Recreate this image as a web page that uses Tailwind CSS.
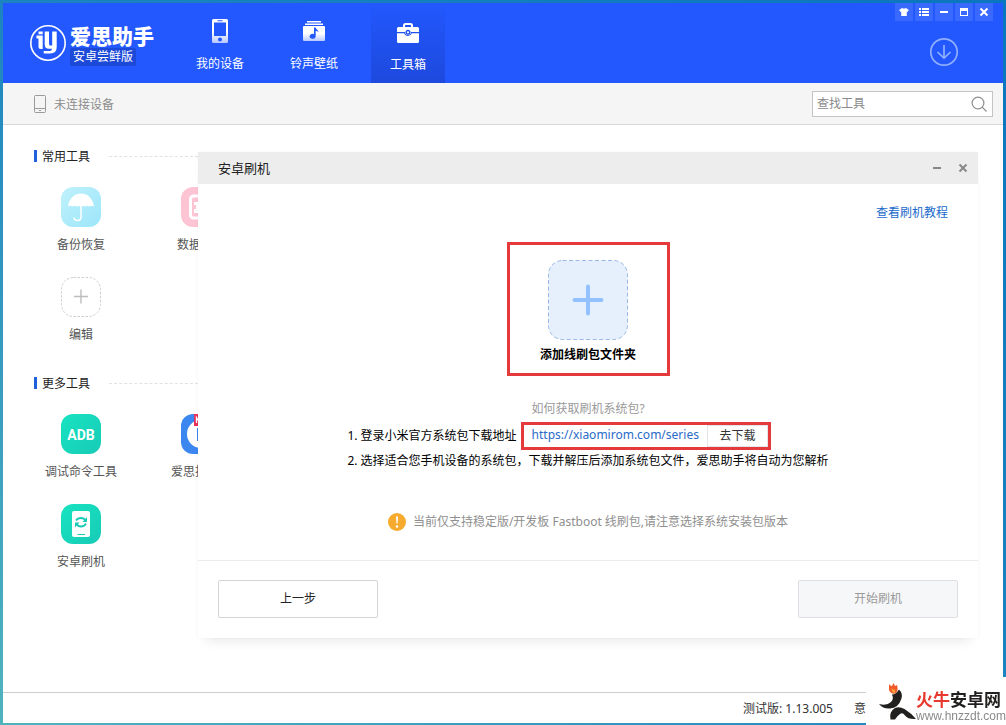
<!DOCTYPE html>
<html lang="zh-CN">
<head>
<meta charset="utf-8">
<meta name="viewport" content="width=device-width, initial-scale=1">
<title>爱思助手 安卓尝鲜版</title>
<script src="https://cdn.jsdelivr.net/npm/@tailwindcss/browser@4"></script>
</head>
<body class="h-screen overflow-hidden bg-linear-to-tr from-[#4fb3bd] via-[#1c84c0] to-[#0a76bf] p-[3px] pb-[2px] font-['Noto_Sans','Noto_Sans_CJK_SC',sans-serif] text-xs leading-4 text-[#222]">
<div class="flex h-full flex-col bg-white">

  <!-- Title bar -->
  <header class="flex h-20 shrink-0 justify-between bg-[#2358fe] text-white">
    <div class="flex">
      <div class="flex w-[180px] items-center gap-[3px] pl-[26px]">
        <svg class="size-[38px] shrink-0" viewBox="0 0 38 38" fill="none" stroke="#fff" aria-hidden="true">
          <circle cx="19" cy="19" r="17.200" stroke-width="1.600"/>
          <path fill="#fff" stroke="none" d="M9.500 7.500h4.200v2.700H9.500zM7.500 11.500h6.200V25h-2.200q-2 0-2-2v-8.500h-2z"/>
          <path fill="#fff" stroke="none" d="M15.700 7.500h4.300V20q0 1.500 1.500 1.500h1.700v-14h4.500V23q0 6.500-6.500 6.500h-6.500V27h6q2.300 0 2.300-2.200h-3q-4.300 0-4.300-4.300z"/>
        </svg>
        <div class="flex flex-col items-start pt-1">
          <span class="text-[21px] leading-[24px] font-black whitespace-nowrap">爱思助手</span>
          <span class="rounded-xs bg-[#1c49d8] px-[3px] pt-px pb-px leading-4">安卓尝鲜版</span>
        </div>
      </div>
      <nav class="flex gap-5">
        <a href="#" class="flex w-[74px] flex-col items-center pt-4">
          <svg class="h-6 w-4" viewBox="0 0 16 24" aria-hidden="true">
            <defs><linearGradient id="fade" x1="0" y1="0" x2="0" y2="1"><stop offset=".5" stop-color="#fff"/><stop offset="1" stop-color="#b8c8ff"/></linearGradient></defs>
            <path fill="url(#fade)" fill-rule="evenodd" d="M1.500 0h13a1.500 1.500 0 0 1 1.500 1.500v21a1.500 1.500 0 0 1-1.500 1.500h-13A1.500 1.500 0 0 1 0 22.500v-21A1.500 1.500 0 0 1 1.500 0zM2 3.500V17h12V3.500zM5.500 1.300v1h5v-1zM8 18.500a2 2 0 1 0 0 4 2 2 0 0 0 0-4z"/>
          </svg>
          <span class="mt-[13px]">我的设备</span>
        </a>
        <a href="#" class="flex w-[74px] flex-col items-center pt-4">
          <svg class="h-6 w-[22px]" viewBox="0 0 22 24" aria-hidden="true">
            <path fill="#fff" d="M4 2h14v1.500H4zM2 4.500h18V6H2z"/>
            <rect y="7" width="22" height="15" rx="1" fill="url(#fade)"/>
            <path fill="#2358fe" d="M11 8.500h1.700c.3 2 2.800 2 2.800 5-.8-1.200-1.600-1.400-2.800-1.500v5.500a3 2.500 0 1 1-1.700-2.500z"/>
          </svg>
          <span class="mt-[13px]">铃声壁纸</span>
        </a>
        <a href="#" aria-current="page" class="flex w-[74px] flex-col items-center bg-linear-to-b from-[#2358fe] to-[#1d49dd] pt-[18px]">
          <svg class="h-6 w-[22px]" viewBox="0 0 22 24" aria-hidden="true">
            <path fill="none" stroke="#fff" stroke-width="2" d="M7 7V4.500Q7 3 8.500 3h5Q15 3 15 4.500V7"/>
            <path fill="#fff" d="M1.500 6h19A1.500 1.500 0 0 1 22 7.500V11h-8a3 3 0 0 1-6 0H0V7.500A1.500 1.500 0 0 1 1.500 6z"/>
            <circle cx="11" cy="11.300" r="1.800" fill="#fff" stroke="#2150ee" stroke-width="1.400"/>
            <path fill="#fff" d="M0 12.200h7.200a4 4 0 0 0 7.600 0H22v8.300a1.500 1.500 0 0 1-1.500 1.500h-19A1.500 1.500 0 0 1 0 20.500z"/>
          </svg>
          <span class="mt-3">工具箱</span>
        </a>
      </nav>
    </div>
    <div class="mr-[10px] flex flex-col items-end">
      <div class="flex gap-[2px]">
        <button type="button" aria-label="皮肤" class="grid size-[18px] place-items-center bg-white/10"><svg class="size-[10px]" viewBox="0 0 10 10" fill="#fff"><path d="M3 1q2 1.200 4 0l2.800 2-1.300 2-.7-.3V9H2.200V4.700L1.500 5 .2 3z"/></svg></button>
        <button type="button" aria-label="菜单" class="grid size-[18px] place-items-center bg-white/10"><svg class="size-[10px]" viewBox="0 0 10 10" fill="#fff"><path d="M0 1h2v2H0zM3 1h7v2H3zM0 4h2v2H0zM3 4h7v2H3zM0 7h2v2H0zM3 7h7v2H3z"/></svg></button>
        <button type="button" aria-label="最小化" class="grid size-[18px] place-items-center bg-white/10"><svg class="size-[10px]" viewBox="0 0 10 10" fill="#fff"><path d="M1 4h8v2H1z"/></svg></button>
        <button type="button" aria-label="最大化" class="grid size-[18px] place-items-center bg-white/10"><svg class="size-[10px]" viewBox="0 0 10 10" fill="#fff"><path fill-rule="evenodd" d="M1 1h8v8H1zM2 4v4h6V4z"/></svg></button>
        <button type="button" aria-label="关闭" class="grid size-[18px] place-items-center bg-white/10"><svg class="size-[10px]" viewBox="0 0 10 10" stroke="#fff" stroke-width="2"><path d="M1.500 1.500l7 7M8.500 1.500l-7 7"/></svg></button>
      </div>
      <button type="button" aria-label="下载" class="mt-4 mr-[34px]">
        <svg class="size-[30px]" viewBox="0 0 30 30" fill="none" stroke="#90b0ff" stroke-width="1.700"><circle cx="15" cy="15" r="13.200"/><path d="M15 8v13M8.500 15l6.500 6.200 6.500-6.200"/></svg>
      </button>
    </div>
  </header>

  <!-- Device status and search -->
  <div class="flex h-[42px] shrink-0 items-center justify-between border-b border-[#d8d8d8] bg-[#f5f5f5] pr-[10px] pl-[31px]">
    <div class="flex items-center gap-2 text-[#8c8c8c]">
      <svg class="h-[18px] w-3" viewBox="0 0 12 18" fill="none" stroke="#9a9a9a" aria-hidden="true"><rect x=".5" y=".5" width="11" height="17" rx="1"/><path d="M1 13.500h10M5 15.500h2"/></svg>
      <span class="pt-[2px]">未连接设备</span>
    </div>
    <label class="flex h-[26px] w-[181px] items-center border border-[#c4c4c8] bg-white pr-[5px] pl-1">
      <input type="search" aria-label="查找工具" placeholder="查找工具" class="min-w-0 flex-1 outline-none placeholder:text-[#8a8a8a]">
      <svg class="size-4" viewBox="0 0 16 16" fill="none" stroke="#8e8e8e" stroke-width="1.200" aria-hidden="true"><circle cx="7" cy="7" r="5.900"/><path d="M11.200 11.200l4.300 4.300"/></svg>
    </label>
  </div>

  <main class="relative min-h-0 flex-1 overflow-hidden pt-[23px]">
    <!-- Tool list -->
    <section>
      <div class="flex w-[195px] items-center pl-[31px]">
        <span class="h-3 w-[3px] bg-[#1f62dc]"></span>
        <h2 class="ml-[5px] pt-[2px] leading-[14px]">常用工具</h2>
        <span class="ml-[19px] flex-1 border-t border-dashed border-[#e2e2e2]"></span>
      </div>
      <ul class="mt-[23px] ml-[18px] grid w-[240px] grid-cols-2 gap-y-6 text-center text-[#555]">
        <li class="flex flex-col items-center gap-[10px]">
          <svg class="size-10" viewBox="0 0 40 40" aria-hidden="true">
            <defs><linearGradient id="sky" x1="0" y1="0" x2="1" y2="1"><stop stop-color="#c0f1fb"/><stop offset="1" stop-color="#9ce6fa"/></linearGradient></defs>
            <rect width="40" height="40" rx="12" fill="url(#sky)"/>
            <path fill="#fff" d="M7 19.500C8 11 14 6.500 20 6.500S32 11 33 19.500q-2.500-1.500-4.500 0-2.500-1.500-4 0-2-1-4.500 0-2.500-1-4.500 0-2-1.500-4 0-2-1.500-4.500 0z"/>
            <path fill="none" stroke="#fff" stroke-width="1.500" d="M20 19v11q0 3.500-3.500 3.500T13 30.500"/>
          </svg>
          <span>备份恢复</span>
        </li>
        <li class="flex flex-col items-center gap-[10px]">
          <svg class="size-10" viewBox="0 0 40 40" fill="none" aria-hidden="true"><rect width="40" height="40" rx="12" fill="#fdc5d4"/><rect x="9.500" y="9" width="21" height="22" rx="3" stroke="#fff" stroke-width="3"/><path fill="#fff" d="M13 15h5v3h-5zM15 18h5v4h-5zM13 22h5v4h-5z"/></svg>
          <span>数据迁移</span>
        </li>
        <li class="flex flex-col items-center gap-[10px]">
          <svg class="size-10" viewBox="0 0 40 40" fill="none" stroke="#cfcfcf" aria-hidden="true"><rect x=".5" y=".5" width="39" height="39" rx="12" stroke-dasharray="2.500 1.500"/><path d="M20 12.500v14M13 19.500h14" stroke="#bdbdbd" stroke-width="1.400"/></svg>
          <span>编辑</span>
        </li>
      </ul>
    </section>
    <section class="mt-8">
      <div class="flex w-[195px] items-center pl-[31px]">
        <span class="h-3 w-[3px] bg-[#1f62dc]"></span>
        <h2 class="ml-[5px] pt-[2px] leading-[14px]">更多工具</h2>
        <span class="ml-[19px] flex-1 border-t border-dashed border-[#e2e2e2]"></span>
      </div>
      <ul class="mt-[23px] ml-[18px] grid w-[240px] grid-cols-2 gap-y-6 text-center text-[#555]">
        <li class="flex flex-col items-center gap-[10px]">
          <svg class="size-10" viewBox="0 0 40 40" aria-hidden="true">
            <defs><linearGradient id="mint" x1="0" y1="0" x2="1" y2="1"><stop stop-color="#17e3c0"/><stop offset="1" stop-color="#18cbb7"/></linearGradient></defs>
            <rect width="40" height="40" rx="12" fill="url(#mint)"/>
            <text x="20" y="26" text-anchor="middle" fill="#fff" font-family="Roboto, sans-serif" font-weight="700" font-size="14">ADB</text>
          </svg>
          <span>调试命令工具</span>
        </li>
        <li class="flex flex-col items-center gap-[10px]">
          <svg class="size-10" viewBox="0 0 40 40" aria-hidden="true"><rect width="40" height="40" rx="12" fill="#3c86f0"/><circle cx="20" cy="20" r="14" fill="#fff"/><path fill="#3c86f0" d="M16 14h10v13H16z"/><path fill="#e8325a" d="M13 0h27v12H13z"/><path fill="none" stroke="#fff" stroke-width="1.300" d="M15.500 9V3.500l3 5V3"/></svg>
          <span>爱思投屏器</span>
        </li>
        <li class="flex flex-col items-center gap-[10px]">
          <svg class="size-10" viewBox="0 0 40 40" aria-hidden="true">
            <rect width="40" height="40" rx="12" fill="url(#mint)"/>
            <rect x="11" y="7" width="18" height="26" rx="2" fill="#fff"/>
            <path fill="none" stroke="#18cbb7" stroke-width="1.800" d="M15 16.500q1.500-2.500 5-2.500 3 0 4.500 2.500M25 19.500q-1.500 3-5 3-3 0-4.500-2.500"/>
            <path fill="#18cbb7" d="M26 13v5h-4.500zM14 23.500v-5h4.500zM16.500 30h7.500v1h-7.500z"/>
          </svg>
          <span>安卓刷机</span>
        </li>
      </ul>
    </section>

    <!-- Flashing dialog, floats over the tool list -->
    <div role="dialog" aria-labelledby="dialog-title" class="absolute top-[27px] right-[25px] left-[195px] flex flex-col bg-white shadow-[0_10px_12px_-8px_rgba(0,0,0,0.1),0_0_3px_rgba(0,0,0,0.03)]">
      <div class="flex h-8 items-center justify-between bg-[#ededed] pr-[10px] pl-5">
        <h1 id="dialog-title" class="text-[13px]">安卓刷机</h1>
        <div class="flex gap-4">
          <button type="button" aria-label="最小化"><svg class="size-[10px]" viewBox="0 0 10 10" fill="#888"><path d="M1 4h8v2H1z"/></svg></button>
          <button type="button" aria-label="关闭"><svg class="size-[10px]" viewBox="0 0 10 10" stroke="#888" stroke-width="2"><path d="M1.500 1.500l7 7M8.500 1.500l-7 7"/></svg></button>
        </div>
      </div>
      <div class="flex flex-col items-center px-[30px] pt-[21px] pb-[29px]">
        <a href="#" class="self-end text-[#1b6acb]">查看刷机教程</a>
        <div class="mt-[21px] flex h-[134px] w-[163px] flex-col items-center border-3 border-[#e53a3c] pt-[15px]">
          <button type="button" class="flex flex-col items-center gap-[7px] font-bold text-black">
            <svg class="size-20" viewBox="0 0 80 80" aria-hidden="true"><rect x=".5" y=".5" width="79" height="79" rx="14" fill="#e6f0fd" stroke="#98b9e3" stroke-dasharray="4 2.500"/><path d="M40 26.500v27M26.500 40h27" stroke="#93c1fd" stroke-width="4" stroke-linecap="round"/></svg>
            <span>添加线刷包文件夹</span>
          </button>
        </div>
        <p class="mt-[25px] text-[#9a9a9a]">如何获取刷机系统包?</p>
        <ol class="mt-[5px] flex flex-col gap-[3px] text-black">
          <li class="flex items-center">
            <span class="mr-1">1. 登录小米官方系统包下载地址</span>
            <div class="flex h-7 items-stretch border-3 border-[#e53a3c]">
              <a href="https://xiaomirom.com/series" class="px-2 leading-5 text-[#2a6ac8]">https://xiaomirom.com/series</a>
              <button type="button" class="w-[61px] border border-[#e2e4e8] text-[#333]">去下载</button>
            </div>
          </li>
          <li>2. 选择适合您手机设备的系统包，下载并解压后添加系统包文件，爱思助手将自动为您解析</li>
        </ol>
        <p class="mt-11 flex items-center gap-[7px] text-[#8f8f8f]">
          <svg class="size-[18px]" viewBox="0 0 18 18" aria-hidden="true"><circle cx="9" cy="9" r="9" fill="#f6ab2f"/><path d="M8 3.500h2l-.4 7H8.400z" fill="#fff"/><circle cx="9" cy="13.500" r="1.300" fill="#fff"/></svg>
          <span>当前仅支持稳定版/开发板 Fastboot 线刷包,请注意选择系统安装包版本</span>
        </p>
      </div>
      <div class="flex justify-between border-t border-[#ececec] px-5 pt-[19px] pb-5">
        <button type="button" class="h-[38px] w-40 rounded-xs border border-[#d5d5d5] bg-white">上一步</button>
        <button type="button" disabled class="h-[38px] w-40 rounded-xs border border-[#dddfe2] bg-[#f6f7f8] text-[#9a9a9a]">开始刷机</button>
      </div>
    </div>
  </main>

  <footer class="flex h-[31px] shrink-0 items-center justify-end gap-[21px] border-t border-[#cfcfcf] pt-px pr-[101px] text-[#333]">
    <span>测试版: 1.13.005</span>
    <a href="#">意见反馈</a>
  </footer>
</div>

<!-- Site mark pinned over the window corner -->
<div class="fixed right-0 bottom-0 flex h-12 w-[140px] items-start bg-white pt-[6px] pl-[13px]">
  <svg class="h-[38px] w-[37px] shrink-0" viewBox="0 0 37 38" aria-hidden="true">
    <path fill="#ef5a28" d="M10 1q1 2 3 2 1-1 1-3 1.500 1 2 3l2-1q1.500 5-.5 7.500-2.500 2-5 .5-3-2-2.500-5z"/>
    <path fill="#f9a13a" d="M12.500 5q2 2.500 3.500 1.500 1 2-.5 3.500-3-.5-3-5z"/>
    <path fill="#221f1f" d="M13 11.500q4 0 7-5 4 4 2.500 9Q19.500 25 11 25.500 4 26 0 21q8 2 12-2 3-3 1-7.500z"/>
    <path fill="#221f1f" d="M11.500 36.500Q10 28.500 16 25q4-2 9.500 1Q32 30 37 36q-8 .5-11-3.500-2.500-3.500-5-1.500-3 2-5 5.500z"/>
  </svg>
  <div class="mt-[7px] flex flex-col whitespace-nowrap">
    <span class="text-[17px] leading-5 font-bold text-[#221f1f]"><span class="text-[#e8382f]">火牛</span>安卓网</span>
    <span class="font-['Liberation_Sans',sans-serif] text-xs leading-3 text-[#8a8a8a]">www.hnzzdt.com</span>
  </div>
</div>
</body>
</html>
